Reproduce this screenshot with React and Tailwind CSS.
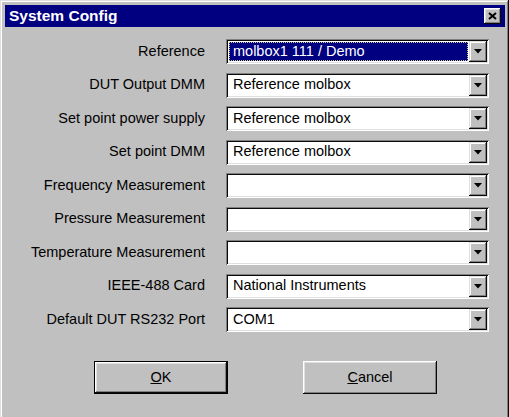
import React from 'react'

const rows = [
  { label: 'Reference', value: 'molbox1 111 / Demo', focused: true },
  { label: 'DUT Output DMM', value: 'Reference molbox' },
  { label: 'Set point power supply', value: 'Reference molbox' },
  { label: 'Set point DMM', value: 'Reference molbox' },
  { label: 'Frequency Measurement', value: '' },
  { label: 'Pressure Measurement', value: '' },
  { label: 'Temperature Measurement', value: '' },
  { label: 'IEEE-488 Card', value: 'National Instruments' },
  { label: 'Default DUT RS232 Port', value: 'COM1' },
]

function DropArrow() {
  return (
    <svg width="8" height="5" viewBox="0 0 8 5">
      <path d="M0 0 H8 L4 4.5 Z" fill="#000" />
    </svg>
  )
}

function Combo({ value, focused }) {
  return (
    <div className="relative flex h-[25px] w-[263px] items-stretch bg-white p-[2px] shadow-[inset_1px_1px_#808080,inset_-1px_-1px_#ffffff,inset_2px_2px_#0a0a0a,inset_-2px_-2px_#dfdfdf]">
      <div className="flex flex-1 items-center p-[1px]">
        {focused ? (
          <div className="flex h-full w-full items-center border border-dotted border-[#c8c890] bg-[#000080] pl-[3px] text-white">
            {value}
          </div>
        ) : (
          <div className="pl-[4px] text-black">{value}</div>
        )}
      </div>
      <div className="flex w-[18px] items-center justify-center bg-[#c0c0c0] shadow-[inset_-1px_-1px_#0a0a0a,inset_1px_1px_#dfdfdf,inset_-2px_-2px_#808080,inset_2px_2px_#ffffff]">
        <DropArrow />
      </div>
    </div>
  )
}

function Button({ children, isDefault }) {
  return (
    <div className={`h-[33px] w-[134px] ${isDefault ? 'border border-black' : ''}`}>
      <div className="flex h-full w-full items-center justify-center bg-[#c0c0c0] text-black shadow-[inset_-1px_-1px_#0a0a0a,inset_1px_1px_#ffffff,inset_-2px_-2px_#808080,inset_2px_2px_#dfdfdf]">
        {children}
      </div>
    </div>
  )
}

export default function App() {
  return (
    <div className="h-[417px] w-[509px] overflow-hidden">
      {/* window runs past the bottom edge of the capture */}
      <div
        className="h-[440px] w-[509px] bg-[#c0c0c0] pl-[5px] pr-[3px] pt-[5px] text-[14.5px] shadow-[inset_-1px_-1px_#0a0a0a,inset_1px_1px_#dfdfdf,inset_-2px_-2px_#808080,inset_2px_2px_#ffffff]"
        style={{ fontFamily: '"Liberation Sans", Arial, sans-serif' }}
      >
        {/* Title bar */}
        <div className="mr-[1px] flex h-[22px] items-center justify-between bg-[#000080] pl-[4px] pr-[4px]">
          <span className="text-[15.5px] font-bold text-white">System Config</span>
          <div className="flex h-[16px] w-[17px] items-center justify-center bg-[#c0c0c0] shadow-[inset_-1px_-1px_#0a0a0a,inset_1px_1px_#ffffff,inset_-2px_-2px_#808080,inset_2px_2px_#dfdfdf]">
            <svg width="9" height="8" viewBox="0 0 9 8">
              <path d="M1 1 L8 7 M8 1 L1 7" stroke="#000" strokeWidth="2" />
            </svg>
          </div>
        </div>

        {/* Fields */}
        <div className="mt-[12px] grid grid-cols-[200px_263px] gap-x-[21px] gap-y-[8.5px]">
          {rows.map((r) => (
            <React.Fragment key={r.label}>
              <div className="flex items-center justify-end text-black">{r.label}</div>
              <Combo value={r.value} focused={r.focused} />
            </React.Fragment>
          ))}
        </div>

        {/* Buttons */}
        <div className="mt-[29px] flex gap-[75px] pl-[89px]">
          <Button isDefault>
            <span><span className="underline">O</span>K</span>
          </Button>
          <Button>
            <span><span className="underline">C</span>ancel</span>
          </Button>
        </div>
      </div>
    </div>
  )
}
